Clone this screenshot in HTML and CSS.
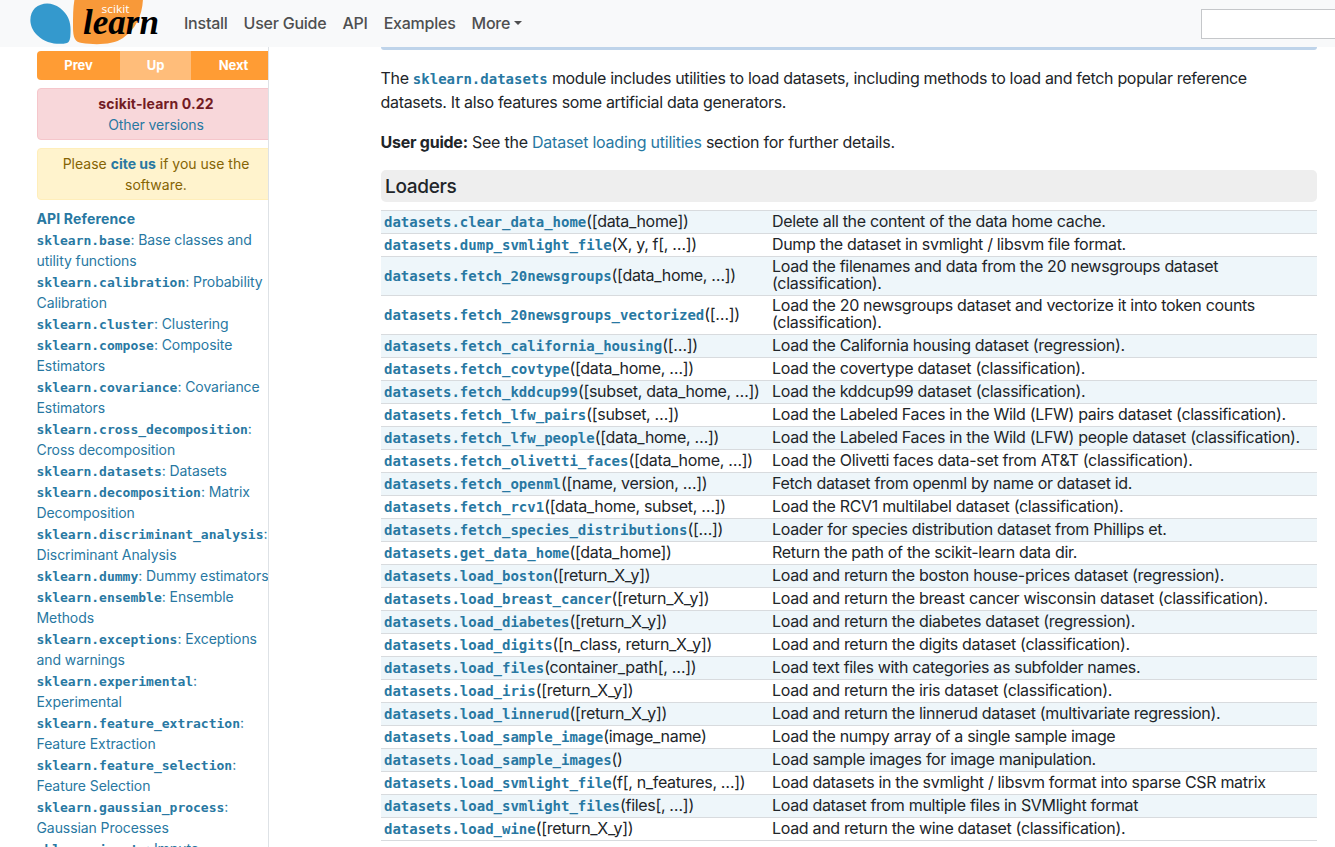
FILE: index.html
```html
<!DOCTYPE html>
<html lang="en">
<head>
<meta charset="utf-8">
<title>API Reference - scikit-learn</title>
<link rel="stylesheet" href="styles.css">
</head>
<body>
<header class="navbar">
  <a class="logo">
    <svg width="134" height="47" viewBox="0 0 134 47">
      <path d="M6 8C13 2 23 2 31 8C40 15 42 23 41.500 33Q41.500 42 38 43C30 45 17 44 8 35C-1 26 0 14 6 8Z" fill="#3499cd"/>
      <path d="M46-3H114C114 14 107 29 94 38C84 45 66 45 53 43C46 42 44 38 44 27C44 15 44 6 46-3Z" fill="#f89939"/>
      <text x="72.500" y="13" class="logo-small" textLength="28" lengthAdjust="spacingAndGlyphs">scikit</text>
      <text x="54" y="34" class="logo-big" textLength="76" lengthAdjust="spacingAndGlyphs">learn</text>
    </svg>
  </a>
  <nav class="nav-links">
    <a>Install</a><a>User Guide</a><a>API</a><a>Examples</a><a class="more">More</a>
  </nav>
  <input class="search" aria-label="Search">
</header>
<div class="layout">
  <aside class="sidebar">
    <div class="sidebar-inner">
      <div class="rellinks"><a class="prev">Prev</a><a class="up">Up</a><a class="next">Next</a></div>
      <div class="box version"><b>scikit-learn 0.22</b><br><a>Other versions</a></div>
      <div class="box cite">Please <a><b>cite us</b></a> if you use the software.</div>
      <div class="toc">
        <b class="toc-title">API Reference</b>
        <ul>
          <li><code>sklearn.base</code>: Base classes and<br>utility functions</li>
          <li><code>sklearn.calibration</code>: Probability<br>Calibration</li>
          <li><code>sklearn.cluster</code>: Clustering</li>
          <li><code>sklearn.compose</code>: Composite<br>Estimators</li>
          <li><code>sklearn.covariance</code>: Covariance<br>Estimators</li>
          <li><code>sklearn.cross_decomposition</code>:<br>Cross decomposition</li>
          <li><code>sklearn.datasets</code>: Datasets</li>
          <li><code>sklearn.decomposition</code>: Matrix<br>Decomposition</li>
          <li><code>sklearn.discriminant_analysis</code>:<br>Discriminant Analysis</li>
          <li><code>sklearn.dummy</code>: Dummy estimators</li>
          <li><code>sklearn.ensemble</code>: Ensemble<br>Methods</li>
          <li><code>sklearn.exceptions</code>: Exceptions<br>and warnings</li>
          <li><code>sklearn.experimental</code>:<br>Experimental</li>
          <li><code>sklearn.feature_extraction</code>:<br>Feature Extraction</li>
          <li><code>sklearn.feature_selection</code>:<br>Feature Selection</li>
          <li><code>sklearn.gaussian_process</code>:<br>Gaussian Processes</li>
          <li><code>sklearn.impute</code>: Impute</li>
        </ul>
      </div>
    </div>
  </aside>
  <main class="content">
    <div class="title-edge"></div>
    <p>The <code>sklearn.datasets</code> module includes utilities to load datasets, including methods to load and fetch popular reference<br>datasets. It also features some artificial data generators.</p>
    <p class="guide"><b>User guide:</b> See the <a>Dataset loading utilities</a> section for further details.</p>
    <h3>Loaders</h3>
    <table>
      <tr><td><code>datasets.clear_data_home</code>([data_home])</td><td>Delete all the content of the data home cache.</td></tr>
      <tr><td><code>datasets.dump_svmlight_file</code>(X, y, f[, …])</td><td>Dump the dataset in svmlight / libsvm file format.</td></tr>
      <tr><td><code>datasets.fetch_20newsgroups</code>([data_home, …])</td><td>Load the filenames and data from the 20 newsgroups dataset<br>(classification).</td></tr>
      <tr><td><code>datasets.fetch_20newsgroups_vectorized</code>([…])</td><td>Load the 20 newsgroups dataset and vectorize it into token counts<br>(classification).</td></tr>
      <tr><td><code>datasets.fetch_california_housing</code>([…])</td><td>Load the California housing dataset (regression).</td></tr>
      <tr><td><code>datasets.fetch_covtype</code>([data_home, …])</td><td>Load the covertype dataset (classification).</td></tr>
      <tr><td><code>datasets.fetch_kddcup99</code>([subset, data_home, …])</td><td>Load the kddcup99 dataset (classification).</td></tr>
      <tr><td><code>datasets.fetch_lfw_pairs</code>([subset, …])</td><td>Load the Labeled Faces in the Wild (LFW) pairs dataset (classification).</td></tr>
      <tr><td><code>datasets.fetch_lfw_people</code>([data_home, …])</td><td>Load the Labeled Faces in the Wild (LFW) people dataset (classification).</td></tr>
      <tr><td><code>datasets.fetch_olivetti_faces</code>([data_home, …])</td><td>Load the Olivetti faces data-set from AT&amp;T (classification).</td></tr>
      <tr><td><code>datasets.fetch_openml</code>([name, version, …])</td><td>Fetch dataset from openml by name or dataset id.</td></tr>
      <tr><td><code>datasets.fetch_rcv1</code>([data_home, subset, …])</td><td>Load the RCV1 multilabel dataset (classification).</td></tr>
      <tr><td><code>datasets.fetch_species_distributions</code>([…])</td><td>Loader for species distribution dataset from Phillips et.</td></tr>
      <tr><td><code>datasets.get_data_home</code>([data_home])</td><td>Return the path of the scikit-learn data dir.</td></tr>
      <tr><td><code>datasets.load_boston</code>([return_X_y])</td><td>Load and return the boston house-prices dataset (regression).</td></tr>
      <tr><td><code>datasets.load_breast_cancer</code>([return_X_y])</td><td>Load and return the breast cancer wisconsin dataset (classification).</td></tr>
      <tr><td><code>datasets.load_diabetes</code>([return_X_y])</td><td>Load and return the diabetes dataset (regression).</td></tr>
      <tr><td><code>datasets.load_digits</code>([n_class, return_X_y])</td><td>Load and return the digits dataset (classification).</td></tr>
      <tr><td><code>datasets.load_files</code>(container_path[, …])</td><td>Load text files with categories as subfolder names.</td></tr>
      <tr><td><code>datasets.load_iris</code>([return_X_y])</td><td>Load and return the iris dataset (classification).</td></tr>
      <tr><td><code>datasets.load_linnerud</code>([return_X_y])</td><td>Load and return the linnerud dataset (multivariate regression).</td></tr>
      <tr><td><code>datasets.load_sample_image</code>(image_name)</td><td>Load the numpy array of a single sample image</td></tr>
      <tr><td><code>datasets.load_sample_images</code>()</td><td>Load sample images for image manipulation.</td></tr>
      <tr><td><code>datasets.load_svmlight_file</code>(f[, n_features, …])</td><td>Load datasets in the svmlight / libsvm format into sparse CSR matrix</td></tr>
      <tr><td><code>datasets.load_svmlight_files</code>(files[, …])</td><td>Load dataset from multiple files in SVMlight format</td></tr>
      <tr><td><code>datasets.load_wine</code>([return_X_y])</td><td>Load and return the wine dataset (classification).</td></tr>
    </table>
  </main>
</div>
</body>
</html>
```
FILE: styles.css
```css
* { box-sizing: border-box; }
body {
  margin: 0;
  height: 847px;
  overflow: hidden;
  background: #fff;
  color: #212529;
  font: 16px/24px Inter, "Liberation Sans", sans-serif;
  letter-spacing: -0.32px;
}
code {
  font: bold 14px "DejaVu Sans Mono", monospace;
  letter-spacing: 0;
  color: #2878a2;
}
a { color: #2878a2; }
.navbar {
  display: flex;
  align-items: center;
  height: 47px;
  padding-left: 29px;
  background: #f8f9fa;
  overflow: hidden;
}
.logo { display: flex; width: 134px; margin-right: 21px; flex: none; }
.logo-small { font: 11px "Open Sans", sans-serif; fill: #fff; letter-spacing: 0; }
.logo-big { font: italic bold 36px "Liberation Serif", serif; fill: #000; letter-spacing: 0; }
.nav-links { display: flex; gap: 16px; font-weight: 500; flex: none; letter-spacing: -0.24px; margin-top: -2px; }
.nav-links a { color: #4e4f50; }
.more::after {
  content: "";
  display: inline-block;
  margin-left: 4px;
  vertical-align: 4px;
  border: 4px solid transparent;
  border-top-color: currentColor;
  border-bottom: 0;
}
.search {
  flex: none;
  width: 160px;
  height: 30px;
  margin: 1px -26px 0 auto;
  border: 1px solid #c5c7ca;
  background: #fff;
}
.layout { display: flex; height: 800px; }
.sidebar {
  flex: none;
  width: 269px;
  padding: 4px 0 0 37px;
  border-right: 1px solid #dee2e6;
  overflow: hidden;
}
.sidebar-inner { width: 238px; font-size: 14px; line-height: 21px; letter-spacing: -0.08px; }
.rellinks {
  display: grid;
  grid-template-columns: 83px 71px 84px;
  height: 29px;
  border-radius: 4px;
  overflow: hidden;
  text-align: center;
  font-size: 13px;
  font-weight: 700;
  line-height: 29px;
}
.rellinks a { color: #fff; background: #ff9c34; }
.rellinks .next { padding-left: 1px; }
.rellinks .up { background: #ffbd7a; }
.box {
  height: 52px;
  margin-top: 8px;
  padding: 4px;
  border: 1px solid;
  border-radius: 4px;
  text-align: center;
}
.version { color: #721c24; background: #f8d7da; border-color: #f5c6cb; }
.version b { letter-spacing: 0.15px; }
.cite { color: #856404; background: #fff3cd; border-color: #ffeeba; padding: 4px 18px; letter-spacing: 0; }
.toc { margin: 8px 0 0 -0.5px; color: #2878a2; white-space: nowrap; }
.toc-title { display: block; letter-spacing: 0.15px; }
.toc ul { margin: 0; padding: 0; list-style: none; }
.toc code { font-size: 13px; line-height: 1; }
.content { width: 936px; margin-left: 112px; }
.title-edge { height: 3px; background: #bfd4ea; border-radius: 0 0 5px 5px; }
.content p { margin: 16px 0 16px -0.5px; white-space: nowrap; }
.content .guide { letter-spacing: -0.24px; }
.content h3 {
  margin: 0;
  height: 32px;
  padding-left: 4px;
  border-radius: 5px;
  background: #eee;
  font-size: 19px;
  font-weight: 500;
  line-height: 33px;
}
table {
  width: 100%;
  margin-top: 8px;
  border-collapse: collapse;
  table-layout: fixed;
  line-height: 17px;
  white-space: nowrap;
}
tr { height: 23px; border-top: 1px solid #d8dbde; }
tr:last-child { border-bottom: 1px solid #d8dbde; }
tr:nth-child(odd) { background: #eef6fa; }
td { padding: 1px 3px 3px; vertical-align: middle; }
td:first-child { width: 388px; }
td code { line-height: 1; }
```
